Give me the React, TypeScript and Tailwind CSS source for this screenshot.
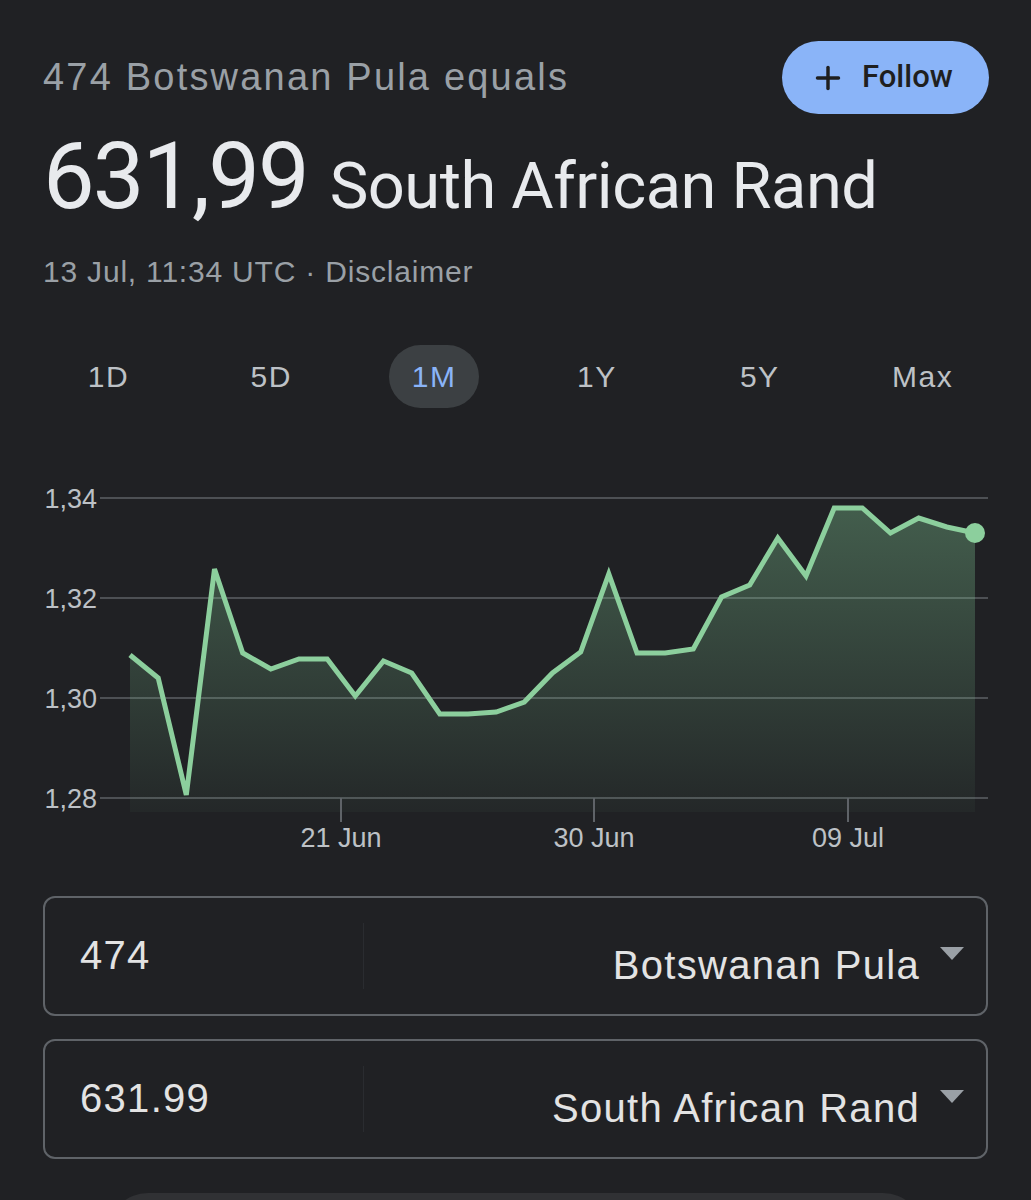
import { Plus } from 'lucide-react';

const points = [
  655, 678, 795, 569, 653, 669, 659, 659, 696, 661, 673, 714, 714, 712, 702, 673,
  652, 574, 653, 653, 649, 597, 585, 538, 576, 508, 508, 533, 518, 527, 533,
];

const step = (975 - 130) / (points.length - 1);
const coords = points.map((y, i) => [130 + i * step, y] as const);
const linePath = coords.map(([x, y], i) => `${i === 0 ? 'M' : 'L'}${x.toFixed(1)} ${y}`).join(' ');
const areaPath = `${linePath} L975 812 L130 812 Z`;

const yLabels = [
  { label: '1,34', y: 498 },
  { label: '1,32', y: 598 },
  { label: '1,30', y: 698 },
  { label: '1,28', y: 798 },
];

const xTicks = [
  { label: '21 Jun', x: 341 },
  { label: '30 Jun', x: 594 },
  { label: '09 Jul', x: 848 },
];

const ranges = ['1D', '5D', '1M', '1Y', '5Y', 'Max'];

function Chart() {
  return (
    <svg width="945" height="400" viewBox="43 470 945 400" className="block">
      <defs>
        <linearGradient id="fill" x1="0" y1="0" x2="0" y2="1">
          <stop offset="0%" stopColor="#81c995" stopOpacity="0.36" />
          <stop offset="100%" stopColor="#81c995" stopOpacity="0.04" />
        </linearGradient>
      </defs>
      {yLabels.map((g) => (
        <g key={g.label}>
          <line x1="100" x2="988" y1={g.y} y2={g.y} stroke="#4d5054" strokeWidth="2" />
          <text
            x="97"
            y={g.y + 10}
            textAnchor="end"
            fill="#bdc1c6"
            fontSize="27"
            fontFamily="'Liberation Sans', Arial, sans-serif"
          >
            {g.label}
          </text>
        </g>
      ))}
      <path d={areaPath} fill="url(#fill)" />
      <path d={linePath} fill="none" stroke="#8ccf9d" strokeWidth="5" strokeLinejoin="miter" />
      <circle cx="975" cy="533" r="10" fill="#8ccf9d" />
      {xTicks.map((t) => (
        <g key={t.label}>
          <line x1={t.x} x2={t.x} y1="798" y2="822" stroke="#5f6368" strokeWidth="2" />
          <text
            x={t.x}
            y="847"
            textAnchor="middle"
            fill="#bdc1c6"
            fontSize="27"
            fontFamily="'Liberation Sans', Arial, sans-serif"
          >
            {t.label}
          </text>
        </g>
      ))}
    </svg>
  );
}

function ConverterBox({ value, currency }: { value: string; currency: string }) {
  return (
    <div className="flex h-[120px] rounded-[12px] border-2 border-[#5f6368] font-['Liberation_Sans',Arial,sans-serif] tracking-[1.3px]">
      <div className="w-[318px] pl-[35px] pt-[33px] text-[40px] leading-[48px] text-[#e3e3e3]">{value}</div>
      <div className="my-[25px] w-px bg-[#2a2c30]" />
      <div className="flex flex-1 items-start justify-end">
        <span className="pt-[43px] text-[40px] leading-[48px] text-[#e3e3e3]">{currency}</span>
        <span className="ml-[20px] mr-[22px] mt-[49px] h-0 w-0 border-x-[12px] border-t-[13px] border-x-transparent border-t-[#9aa0a6]" />
      </div>
    </div>
  );
}

export default function App() {
  return (
    <div className="h-[1200px] w-[1031px] overflow-hidden bg-[#202124] px-[43px] pt-[41px]">
      <div className="flex h-[73px] items-center justify-between">
        <p className="font-['Liberation_Sans',Arial,sans-serif] text-[38px] tracking-[2.2px] text-[#9aa0a6]">
          474 Botswanan Pula equals
        </p>
        <button className="mr-[-1px] flex h-[73px] w-[207px] items-center rounded-full bg-[#8ab4f8] pl-[28px] text-[#1f1f1f]">
          <Plus size={36} strokeWidth={2.3} />
          <span className="ml-[16px] font-['Roboto',Arial,sans-serif] text-[31px] font-medium">Follow</span>
        </button>
      </div>

      <div className="mt-[13px] flex h-[100px] items-baseline gap-[22px] font-['Roboto',sans-serif] leading-[100px] text-[#e8eaed]">
        <span className="text-[92px] tracking-[-2px]">631,99</span>
        <span className="text-[65px] tracking-[-0.5px]">South African Rand</span>
      </div>

      <p className="mt-[27px] font-['Liberation_Sans',Arial,sans-serif] text-[30px] leading-[36px] tracking-[0.8px] text-[#9aa0a6]">
        13 Jul, 11:34 UTC · Disclaimer
      </p>

      <div className="mx-[-16px] mt-[55px] grid grid-cols-6">
        {ranges.map((r) => (
          <div key={r} className="flex justify-center">
            <span
              className={
                r === '1M'
                  ? 'flex h-[63px] w-[90px] items-center justify-center rounded-full bg-[#3c4043] font-["Liberation_Sans",Arial,sans-serif] text-[30px] tracking-[1.5px] text-[#8ab4f8]'
                  : 'flex h-[63px] w-[90px] items-center justify-center font-["Liberation_Sans",Arial,sans-serif] text-[30px] tracking-[1.5px] text-[#bdc1c6]'
              }
            >
              {r}
            </span>
          </div>
        ))}
      </div>

      <div className="mt-[62px]">
        <Chart />
      </div>

      <div className="mt-[26px] flex flex-col gap-[23px]">
        <ConverterBox value="474" currency="Botswanan Pula" />
        <ConverterBox value="631.99" currency="South African Rand" />
      </div>

      <div className="mx-[65px] mt-[34px] h-[40px] rounded-t-[40px] bg-[#303134]" />
    </div>
  );
}
